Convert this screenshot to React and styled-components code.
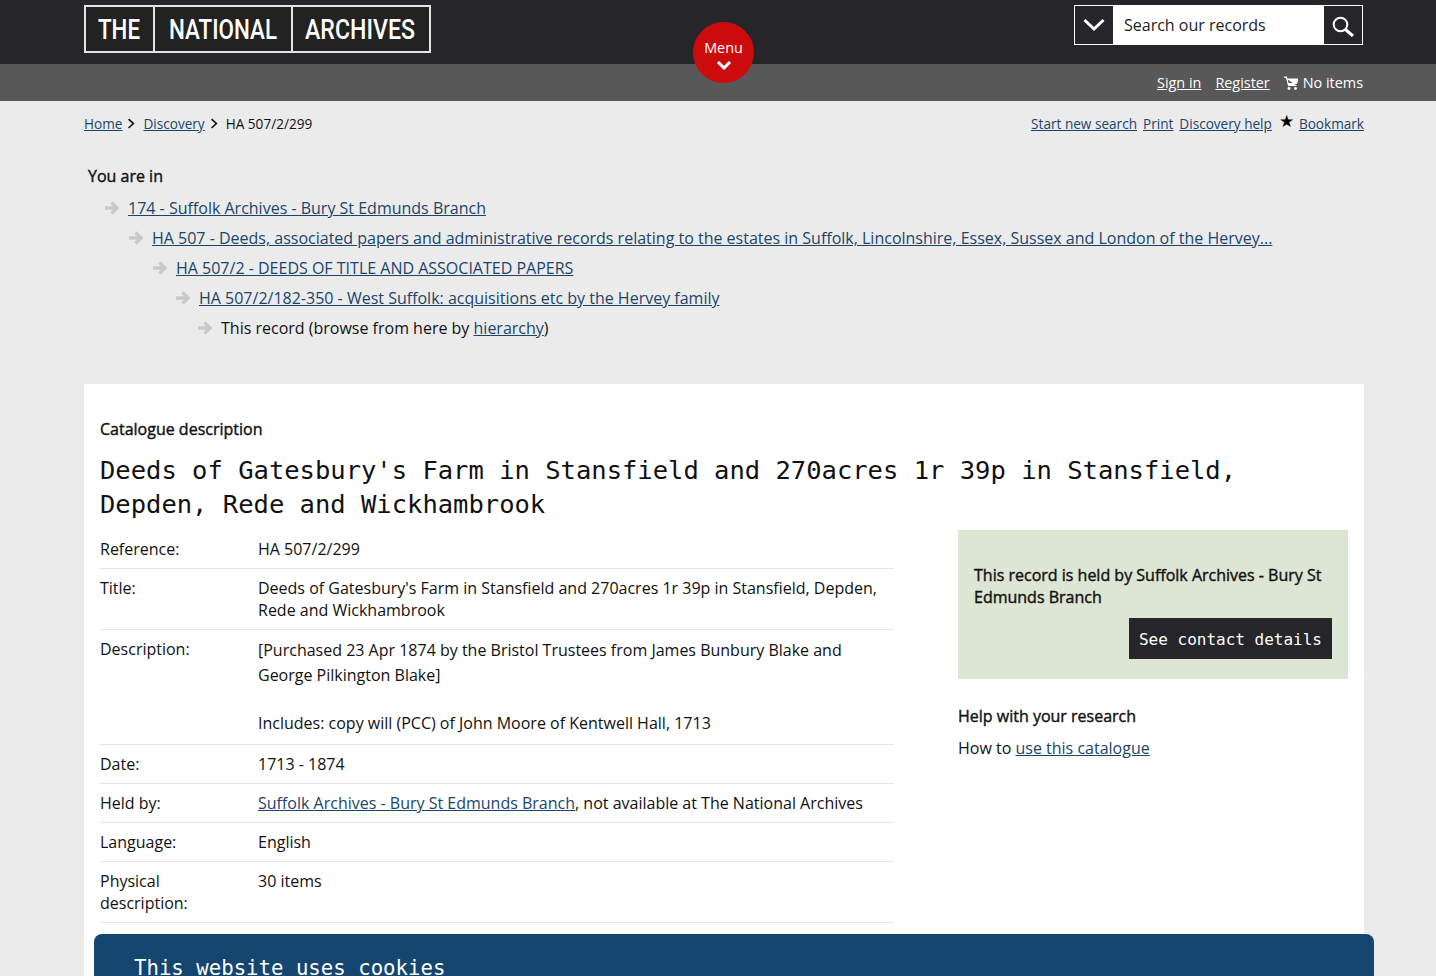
import styled, { createGlobalStyle } from 'styled-components';

const GlobalStyle = createGlobalStyle`
  html, body {
    margin: 0;
    padding: 0;
    height: 100%;
    overflow: hidden;
    background: #ebebeb;
    color: #111;
    font-family: "Open Sans", "Liberation Sans", sans-serif;
    font-size: 16px;
  }
  a {
    color: #1c4469;
    text-decoration: underline;
  }
`;

const MONO = `"DejaVu Sans Mono", "Liberation Mono", monospace`;

const Wrap = styled.div`
  width: 1280px;
  margin-left: 84px;
`;

const TopBar = styled.header`
  height: 64px;
  background: #26262a;
  position: relative;
`;

const TopInner = styled(Wrap)`
  display: flex;
  justify-content: space-between;
  align-items: flex-start;
  padding-top: 5px;
`;

const Logo = styled.svg`
  display: block;
  width: 347px;
  height: 48px;
  overflow: visible;
`;

const MenuButton = styled.div`
  position: absolute;
  left: 693px;
  top: 22px;
  width: 61px;
  height: 61px;
  border-radius: 50%;
  background: #cc0c0c;
  color: #fff;
  font-size: 14.4px;
  line-height: 20px;
  text-align: center;
  padding-top: 16px;
  box-sizing: border-box;
  z-index: 2;
  svg {
    display: block;
    margin: 2px auto 0;
  }
`;

const Search = styled.div`
  display: flex;
  width: 289px;
  height: 40px;
  margin-right: 1px;
  border: 1px solid #fff;
  box-sizing: border-box;
  background: #fff;
`;

const SearchCell = styled.div`
  width: 38px;
  background: #26262a;
  display: flex;
  align-items: center;
  justify-content: center;
`;

const SearchField = styled.div`
  flex: 1;
  padding-left: 11px;
  line-height: 38px;
  color: #222;
`;

const SubBar = styled.div`
  height: 37px;
  background: #585858;
`;

const SubInner = styled(Wrap)`
  display: flex;
  justify-content: flex-end;
  align-items: center;
  height: 37px;
  padding: 0 1px 1px 0;
  box-sizing: border-box;
  font-size: 14.4px;
  color: #fff;
  a {
    color: #fff;
    margin-right: 14px;
  }
  svg {
    margin-right: 5px;
  }
`;

const CrumbBar = styled(Wrap)`
  display: flex;
  justify-content: space-between;
  align-items: center;
  height: 44px;
  font-size: 13.6px;
`;

const Crumbs = styled.div`
  display: flex;
  align-items: center;
  svg {
    margin: 1px 8px 0 5px;
  }
`;

const PageLinks = styled.div`
  display: flex;
  align-items: center;
  gap: 6px;
`;

const Star = styled.span`
  font-size: 17px;
  line-height: 1;
  margin: -5px -1px 0 1px;
  color: #000;
`;

const Trail = styled(Wrap)`
  padding: 20px 0 0 4px;
  box-sizing: border-box;
  height: 239px;
`;

const BoldText = styled.div`
  font-weight: 400;
  -webkit-text-stroke: 0.4px currentColor;
  line-height: 22px;
`;

const TrailTitle = styled(BoldText)`
  margin-bottom: 6px;
`;

const TrailRow = styled.div`
  display: flex;
  align-items: center;
  height: 30px;
  padding-left: ${(p) => p.$indent}px;
  svg {
    margin-right: 8px;
    flex: none;
  }
`;

const Card = styled(Wrap)`
  background: #fff;
  padding: 34px 16px 0;
  box-sizing: border-box;
  height: 600px;
`;

const Heading = styled.h1`
  margin: 13px 0 9px;
  font-family: ${MONO};
  font-weight: 400;
  font-size: 25.5px;
  line-height: 34px;
  color: #111;
`;

const Columns = styled.div`
  display: grid;
  grid-template-columns: 794px 390px;
  column-gap: 64px;
`;

const Row = styled.div`
  display: grid;
  grid-template-columns: 158px 1fr;
  padding: 8px 0;
  border-bottom: 1px solid #e6e6e6;
  line-height: 22px;
`;

const Label = styled.div`
  padding-right: 30px;
`;

const Para = styled.p`
  margin: 0 0 23px;
  line-height: 25px;
  &:last-child {
    margin-bottom: 0;
  }
`;

const HeldBox = styled.div`
  background: #dde5d4;
  padding: 34px 16px 20px;
  display: flex;
  flex-direction: column;
`;

const ContactButton = styled.div`
  align-self: flex-end;
  margin-top: 10px;
  background: #26262a;
  color: #fff;
  font-family: ${MONO};
  font-size: 16px;
  line-height: 39px;
  padding: 2px 10px 0;
`;

const HelpTitle = styled(BoldText)`
  margin-top: 26px;
`;

const HelpText = styled.div`
  margin-top: 10px;
  line-height: 22px;
`;

const CookieBanner = styled.div`
  position: fixed;
  left: 94px;
  top: 934px;
  width: 1280px;
  height: 120px;
  background: #14466f;
  border-radius: 8px 8px 0 0;
  color: #fff;
  font-family: ${MONO};
  font-size: 20.7px;
  line-height: 28px;
  padding: 20px 40px;
  box-sizing: border-box;
`;

const Chevron = ({ size = 10, color = '#111', stroke = 2 }) => (
  <svg width={size} height={size * 1.4} viewBox="0 0 10 14">
    <path d="M2 1.5 L8 7 L2 12.5" fill="none" stroke={color} strokeWidth={stroke} />
  </svg>
);

const Arrow = () => (
  <svg width="16" height="14" viewBox="0 0 16 14">
    <path d="M1 7 H12.5 M7.5 1.5 L13 7 L7.5 12.5" fill="none" stroke="#c8c9cb" strokeWidth="3.4" />
  </svg>
);

const trail = [
  { indent: 16, text: '174 - Suffolk Archives - Bury St Edmunds Branch' },
  { indent: 40, text: 'HA 507 - Deeds, associated papers and administrative records relating to the estates in Suffolk, Lincolnshire, Essex, Sussex and London of the Hervey...' },
  { indent: 64, text: 'HA 507/2 - DEEDS OF TITLE AND ASSOCIATED PAPERS' },
  { indent: 87, text: 'HA 507/2/182-350 - West Suffolk: acquisitions etc by the Hervey family' },
];

const details = [
  { label: 'Reference:', value: 'HA 507/2/299' },
  { label: 'Title:', value: "Deeds of Gatesbury's Farm in Stansfield and 270acres 1r 39p in Stansfield, Depden, Rede and Wickhambrook" },
  {
    label: 'Description:',
    value: (
      <>
        <Para>[Purchased 23 Apr 1874 by the Bristol Trustees from James Bunbury Blake and George Pilkington Blake]</Para>
        <Para>Includes: copy will (PCC) of John Moore of Kentwell Hall, 1713</Para>
      </>
    ),
  },
  { label: 'Date:', value: '1713 - 1874' },
  {
    label: 'Held by:',
    value: (
      <>
        <a href="#held">Suffolk Archives - Bury St Edmunds Branch</a>, not available at The National Archives
      </>
    ),
  },
  { label: 'Language:', value: 'English' },
  { label: 'Physical description:', value: '30 items' },
];

export default function App() {
  return (
    <>
      <GlobalStyle />
      <TopBar>
        <TopInner>
          <Logo viewBox="0 0 347 48">
            <rect x="1" y="1" width="345" height="46" fill="#222" stroke="#e4e4e4" strokeWidth="2" />
            <path d="M70 1 V47 M208 1 V47" stroke="#e4e4e4" strokeWidth="2" />
            <g fill="#fff" fontFamily="Roboto, sans-serif" fontWeight="500" fontSize="28">
              <text x="14" y="34" textLength="42" lengthAdjust="spacingAndGlyphs">THE</text>
              <text x="85" y="34" textLength="108" lengthAdjust="spacingAndGlyphs">NATIONAL</text>
              <text x="221" y="34" textLength="110" lengthAdjust="spacingAndGlyphs">ARCHIVES</text>
            </g>
          </Logo>
          <Search>
            <SearchCell>
              <svg width="24" height="16" viewBox="0 0 24 16">
                <path d="M2.5 3 L12 12 L21.5 3" fill="none" stroke="#fff" strokeWidth="3" />
              </svg>
            </SearchCell>
            <SearchField>Search our records</SearchField>
            <SearchCell>
              <svg width="24" height="24" viewBox="0 0 24 24">
                <circle cx="9.5" cy="11.5" r="6.8" fill="none" stroke="#fff" strokeWidth="2" />
                <path d="M14.5 16.5 L22 23" stroke="#fff" strokeWidth="3" />
              </svg>
            </SearchCell>
          </Search>
        </TopInner>
        <MenuButton>
          Menu
          <svg width="16" height="10" viewBox="0 0 16 10">
            <path d="M2 2 L8 8 L14 2" fill="none" stroke="#fff" strokeWidth="3" />
          </svg>
        </MenuButton>
      </TopBar>
      <SubBar>
        <SubInner>
          <a href="#signin">Sign in</a>
          <a href="#register">Register</a>
          <svg width="14" height="15" viewBox="0 0 14 15">
            <path d="M0 2 H2.5 L4.5 10.5 H12.5 M3 4 H14 L12.5 8.5 H4" fill="#fff" stroke="#fff" strokeWidth="1.2" />
            <circle cx="5" cy="13.5" r="1.4" fill="#fff" />
            <circle cx="11.5" cy="13.5" r="1.4" fill="#fff" />
          </svg>
          No items
        </SubInner>
      </SubBar>
      <CrumbBar>
        <Crumbs>
          <a href="#home">Home</a>
          <Chevron size={8} />
          <a href="#discovery">Discovery</a>
          <Chevron size={8} />
          HA 507/2/299
        </Crumbs>
        <PageLinks>
          <a href="#new">Start new search</a>
          <a href="#print">Print</a>
          <a href="#help">Discovery help</a>
          <Star>★</Star>
          <a href="#bookmark">Bookmark</a>
        </PageLinks>
      </CrumbBar>
      <Trail>
        <TrailTitle>You are in</TrailTitle>
        {trail.map((item) => (
          <TrailRow key={item.text} $indent={item.indent}>
            <Arrow />
            <a href="#trail">{item.text}</a>
          </TrailRow>
        ))}
        <TrailRow $indent={109}>
          <Arrow />
          <span>
            This record (browse from here by <a href="#hierarchy">hierarchy</a>)
          </span>
        </TrailRow>
      </Trail>
      <Card>
        <BoldText>Catalogue description</BoldText>
        <Heading>
          Deeds of Gatesbury's Farm in Stansfield and 270acres 1r 39p in Stansfield, Depden, Rede and Wickhambrook
        </Heading>
        <Columns>
          <div>
            {details.map((row) => (
              <Row key={row.label}>
                <Label>{row.label}</Label>
                <div>{row.value}</div>
              </Row>
            ))}
          </div>
          <div>
            <HeldBox>
              <BoldText>This record is held by Suffolk Archives - Bury St Edmunds Branch</BoldText>
              <ContactButton>See contact details</ContactButton>
            </HeldBox>
            <HelpTitle>Help with your research</HelpTitle>
            <HelpText>
              How to <a href="#catalogue">use this catalogue</a>
            </HelpText>
          </div>
        </Columns>
      </Card>
      <CookieBanner>This website uses cookies</CookieBanner>
    </>
  );
}
